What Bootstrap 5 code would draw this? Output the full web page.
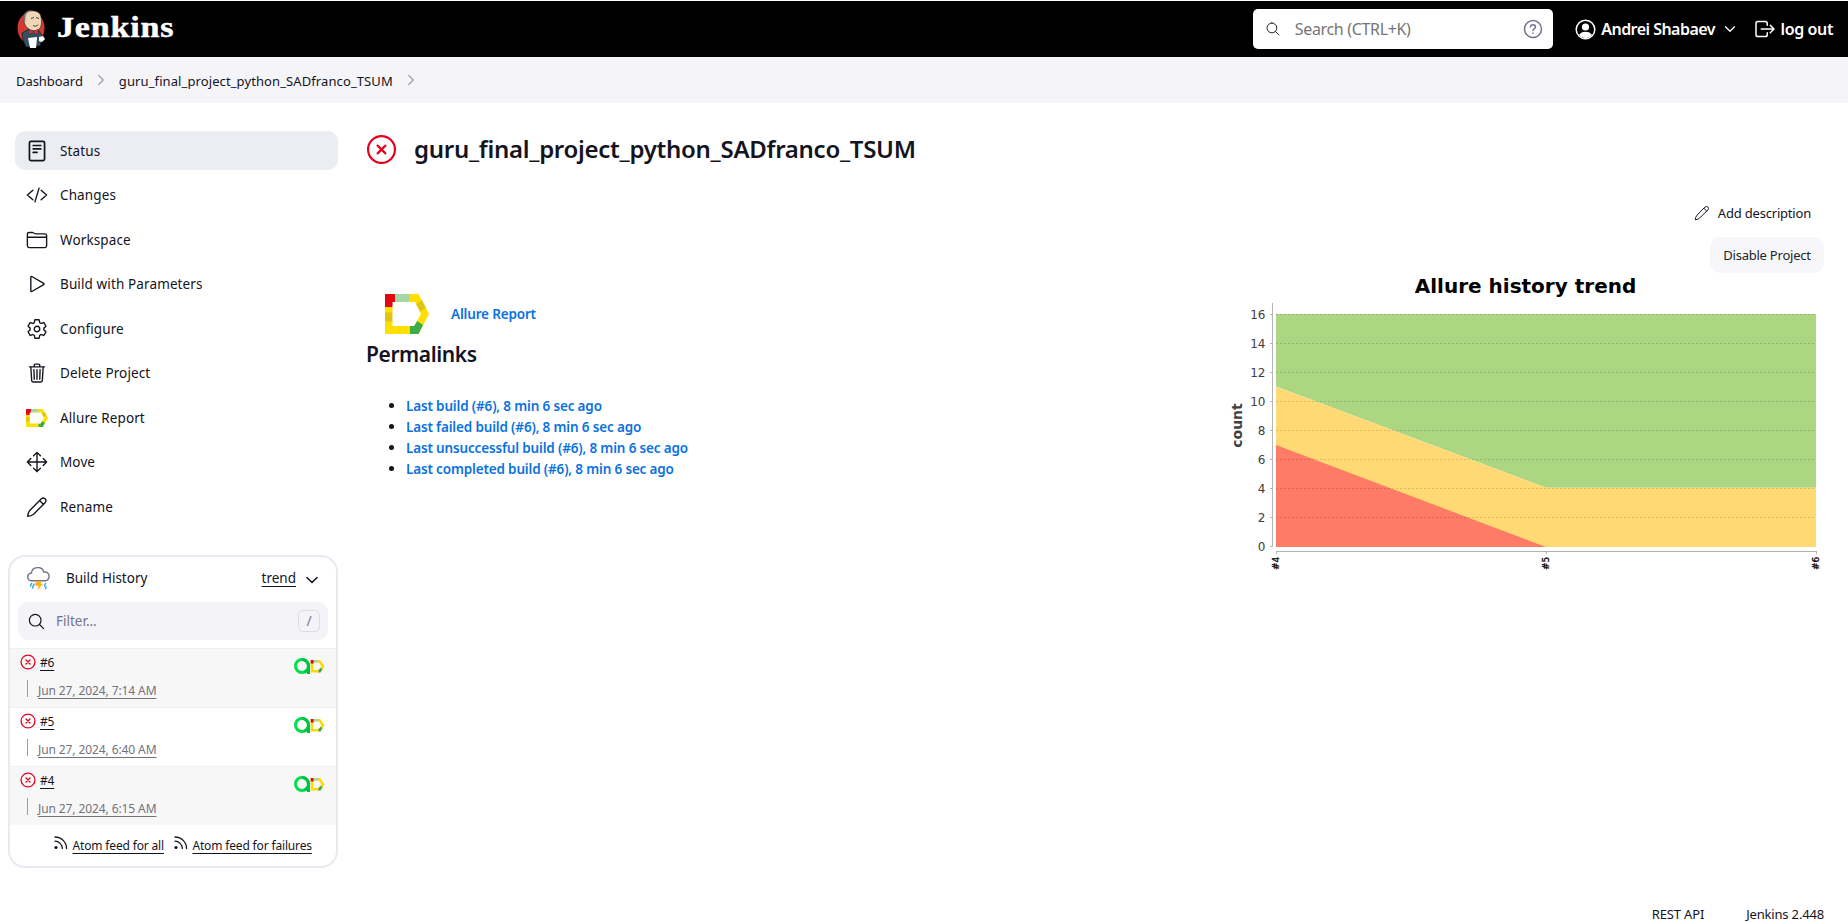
<!DOCTYPE html>
<html lang="en">
<head>
<meta charset="utf-8">
<title>guru_final_project_python_SADfranco_TSUM [Jenkins]</title>
<link rel="stylesheet" href="https://cdn.jsdelivr.net/npm/bootstrap@5.3.0/dist/css/bootstrap.min.css">
<style>
body{font-family:"Noto Sans","Open Sans",sans-serif;font-size:14px;line-height:21px;color:#14141f;height:922px;overflow:hidden;background:#fff}
a{color:inherit}
.ic{fill:none;stroke:currentColor;stroke-width:32;stroke-linecap:round;stroke-linejoin:round;flex:none;display:block}
.topbar{height:57px;background:#000;border-top:1px solid #fff;color:#fff;padding:0 15px 0 16px}
.brand-name{font:bold 30px/40px "Liberation Serif",serif;-webkit-text-stroke:.5px #fff;letter-spacing:.7px;margin-left:11px;margin-top:-5px;transform:scaleX(1.135);transform-origin:left}
.searchbox{width:300px;height:40px;border-radius:5px;background:#fff;padding:0 10px 0 12px;color:#222;margin-right:22px}
.searchbox .hint{color:#757575;font-size:16px;letter-spacing:-.33px;margin-left:14px}
.topbar b{font-size:16px;font-weight:600}
.topbar .user-name{letter-spacing:-.53px;margin-left:5.5px}
.topbar .leave{letter-spacing:-.38px;margin-left:4px}
.crumbs{height:46px;background:#f5f5f8;padding:2px 16px 0;font-size:13px}
.crumbs .ic{color:#9a9aa8;stroke-width:36;margin:-2px 10px 0 10px}
.crumbs .home{letter-spacing:-.05px}
.crumbs .job{letter-spacing:.1px}
.side{width:338px;padding:28px 0 0 15px;font-size:13.5px}
.task{height:39px;border-radius:10px;padding-left:11px;margin-bottom:5.5px;letter-spacing:.12px}
.task span{padding-top:1.5px}
.task .ic,.task .alr{margin-right:12px}
.task.on{background:#ecedf3}
.hist{width:330px;height:313px;margin:29px 0 0 -7px;border:2px solid #e9e9f2;border-radius:17px}
.hist-head{height:45px;padding:0 19px 2px 17px}
.filter{height:38px;margin:0 8px 8px;border-radius:10px;background:#f3f3f8;padding:0 8px 0 9px;color:#73738c}
.filter kbd{width:22px;height:22px;border:1px solid #dddde8;border-radius:5px;background:none;color:#73738c;padding:0;font:14px/20px "Noto Sans";text-align:center}
.brow{height:59px;padding:2px 11px 0 10px;border-top:1px solid #f0f0f0;font-size:12px}
.brow:nth-child(odd){background:#f7f7f7}
.brow .when{color:#73737b;border-left:1px solid #9b9ba3;height:17px;padding-left:10px;margin:7px 0 0 7px;line-height:21px;letter-spacing:-.1px}
.brow .st{color:#e6001f;margin-right:4px;stroke-width:42}
.brow .u{padding-top:1px;letter-spacing:-.2px}
.brow .pair{margin:7px 0 -2px auto}
.when span,.u{text-decoration:underline;text-underline-offset:3px}
.feeds{font-size:12px;padding:10px 0 0 44px;letter-spacing:-.16px}
.feeds .ic{margin:-5px 4.5px 0 0}
.main{padding:26px 24px 0 28px}
h1{font-size:24px;font-weight:650;line-height:40px;margin:0 0 0 18px;letter-spacing:-.28px}
h2{font-size:21px;font-weight:650;line-height:28px;margin:6px 0 27px;letter-spacing:-.4px}
.lnk{color:#0b72e0;font-size:13.5px;font-weight:600;text-decoration:none;letter-spacing:-.16px}
.desc{font-size:13px;height:36px;padding-right:13px;margin-top:26px;letter-spacing:-.2px}
.dis{font-size:13px;height:36px;width:114px;border-radius:10px;background:#f7f7fa;padding:1px 0 0;margin-top:6px;letter-spacing:-.23px}
.perma{padding-left:40px;margin:0}
.perma li{height:21px}
.trend{width:600px;height:300px}
.foot{font-size:13px;padding-right:24px;right:0;bottom:-3px;letter-spacing:-.17px}
</style>
</head>
<body>
<svg width="0" height="0" class="position-absolute">
<symbol id="search" viewBox="0 0 512 512"><path d="M221 64a157 157 0 10157 157A157 157 0 00221 64zM338 338l110 110"/></symbol>
<symbol id="fail" viewBox="0 0 512 512"><circle cx="256" cy="256" r="222"/><path d="M320 320L192 192M192 320l128-128"/></symbol>
<symbol id="down" viewBox="0 0 512 512"><path d="M112 184l144 144 144-144"/></symbol>
<symbol id="next" viewBox="0 0 512 512"><path d="M184 112l144 144-144 144"/></symbol>
<symbol id="pencil" viewBox="0 0 512 512"><path d="M358 62a64 64 0 0190 90L176 424Q120 470 40 472Q42 392 88 336zM316 104l92 92"/></symbol>
<symbol id="rss" viewBox="0 0 14 14"><circle cx="2" cy="11.5" r="1.6" fill="currentColor" stroke="none"/><path d="M1 5.2a7.3 7.3 0 017.3 7.3M1 1a11.6 11.6 0 0111.6 11.6" stroke-width="1.3"/></symbol>
<symbol id="alr" viewBox="0 0 44 40"><path fill="#ffde00" d="M0 0h33.500L44 20 33.500 40H0z"/><path fill="#e30613" d="M0 0h10v13H0z"/><path fill="#a5d6a7" d="M10 0h14.500v8H10z"/><path fill="#e0c510" d="M0 18.500h8v9H0zM30 11l7-5 4 8-7 4z"/><path fill="#3dab49" d="M25 40v-8h4l3-5 6 4-4.500 9z"/><path fill="#fff" d="M7.500 8H30l6 12-7 12H7.500z"/></symbol>
<symbol id="allpair" viewBox="0 0 31 17"><circle cx="8" cy="8" r="6.500" fill="none" stroke="#00e04c" stroke-width="3"/><path d="M14.500 7v9" stroke="#00b844" stroke-width="3"/><path d="M8 1.500A6.500 6.500 0 0114.500 8c0 3-2 5.500-4 6" fill="none" stroke="#00c246" stroke-width="3"/><path d="M18 3.200h7.500l3.500 5-3.500 5H18z" fill="none" stroke="#ffd800" stroke-width="2.500"/><path d="M16.700 2h3v3.500h-3z" fill="#e30613"/><path d="M19.700 2h4.500v2.500h-4.500z" fill="#a5d6a7"/><path d="M24.500 14.500v-2.600l2-2 2 1.200-2 3.400z" fill="#3dab49"/></symbol>
</svg>

<header class="topbar d-flex align-items-center">
  <svg width="30" height="40" viewBox="0 0 30 40"><ellipse cx="15" cy="19" rx="13.500" ry="16" fill="#d33833"/><path fill="#335061" stroke="#111" stroke-width=".6" d="M6 24l7-4 10 2 4 6-3 9-14 1-3-7z"/><path fill="#f0d6b7" stroke="#222" stroke-width=".6" d="M8 7C9 1 20 0 24 5c2 4 2 11 0 14-3 4-9 3-11 1C9 18 7 12 8 7z"/><path fill="#777" d="M7.500 7c1-4 5-6 8-6-4 2-6 4-6 8l-.5 5C8 13 7 11 7.500 7z"/><path fill="#d33833" stroke="#511" stroke-width=".4" d="M13 20.500l4 2 5-2v5l-5-2-4 2z"/><path d="M15 9.500l3-1M20 8.500l3 1M17 16.500c2 1 4 1 5-1" fill="none" stroke="#333" stroke-width=".9"/><path fill="#fff" d="M12 29l9-1v1l-1 10h-6zM23 28l4-1 2 3-3 3-3-1z"/></svg>
  <span class="brand-name">Jenkins</span>
  <div class="searchbox d-flex align-items-center ms-auto">
    <svg class="ic" width="16" height="16"><use href="#search"/></svg><span class="hint">Search (CTRL+K)</span>
    <svg class="ic ms-auto" width="20" height="20" viewBox="0 0 20 20" style="stroke-width:1.500;color:#73738c"><circle cx="10" cy="10" r="8.500"/><path d="M7.500 8c0-3.300 5-3 5 0 0 1.600-2.500 1.600-2.500 3.500M10 14v.2"/></svg>
  </div>
  <svg class="ic" width="21" height="21" viewBox="0 0 21 21" style="stroke-width:1.500"><circle cx="10.500" cy="10.500" r="9.300"/><g fill="#fff" stroke="none"><circle cx="10.500" cy="8" r="3.600"/><path d="M4 16c2-4.500 11-4.500 13 0-3 4-10 4-13 0z"/></g></svg>
  <b class="user-name">Andrei Shabaev</b>
  <svg class="ic" width="16" height="16" style="margin:0 14.500px 0 7px;stroke-width:40"><use href="#down"/></svg>
  <svg class="ic" width="24" height="24" viewBox="0 0 512 512"><path d="M304 336v40a40 40 0 01-40 40H104a40 40 0 01-40-40V136a40 40 0 0140-40h152c22 0 48 18 48 40v40M368 336l80-80-80-80M176 256h256"/></svg>
  <b class="leave">log out</b>
</header>
<nav class="crumbs d-flex align-items-center"><span class="home">Dashboard</span><svg class="ic" width="16" height="16"><use href="#next"/></svg><span class="job">guru_final_project_python_SADfranco_TSUM</span><svg class="ic" width="16" height="16"><use href="#next"/></svg></nav>

<div class="d-flex">
<aside class="side flex-shrink-0">
  <div class="task on d-flex align-items-center"><svg class="ic" width="22" height="22" viewBox="0 0 512 512" style="stroke-width:40"><rect x="80" y="32" width="352" height="448" rx="36"/><path d="M168 128h176M168 208h176M168 288h88"/></svg><span>Status</span></div>
  <div class="task d-flex align-items-center"><svg class="ic" width="22" height="22" viewBox="0 0 512 512"><path d="M160 368L32 256l128-112M352 368l128-112-128-112M304 96l-96 320"/></svg><span>Changes</span></div>
  <div class="task d-flex align-items-center"><svg class="ic" width="22" height="22" viewBox="0 0 512 512"><path d="M440 432H72a40 40 0 01-40-40V120a40 40 0 0140-40h76a40 40 0 0122 7l28 18a40 40 0 0022 7h220a40 40 0 0140 40v240a40 40 0 01-40 40zM32 192h448"/></svg><span>Workspace</span></div>
  <div class="task d-flex align-items-center"><svg class="ic" width="22" height="22" viewBox="0 0 512 512"><path d="M112 96v320c0 12 12 20 24 14l276-160c10-6 10-22 0-28L136 82c-12-6-24 2-24 14z"/></svg><span>Build with Parameters</span></div>
  <div class="task d-flex align-items-center"><svg class="ic" width="22" height="22" viewBox="0 0 512 512"><path d="M262.290 192.310a64 64 0 1057.400 57.400 64.130 64.130 0 00-57.400-57.400zM416.390 256a154.340 154.340 0 01-1.530 20.790l45.210 35.460a10.810 10.810 0 012.450 13.750l-42.770 74a10.810 10.810 0 01-13.140 4.590l-44.900-18.080a16.110 16.110 0 00-15.170 1.750A164.480 164.480 0 01325 400.800a15.940 15.940 0 00-8.820 12.140l-6.730 47.890a11.080 11.080 0 01-10.680 9.170h-85.540a11.110 11.110 0 01-10.690-8.870l-6.720-47.820a16.070 16.070 0 00-9-12.220 155.300 155.300 0 01-21.460-12.570 16 16 0 00-15.110-1.710l-44.890 18.070a10.810 10.810 0 01-13.140-4.580l-42.770-74a10.800 10.800 0 012.450-13.750l38.210-30a16.050 16.050 0 006-14.080c-.36-4.170-.58-8.330-.58-12.500s.21-8.270.58-12.350a16 16 0 00-6.070-13.940l-38.190-30A10.810 10.810 0 0149.480 186l42.770-74a10.810 10.810 0 0113.140-4.590l44.900 18.080a16.110 16.110 0 0015.170-1.750A164.480 164.480 0 01187 111.200a15.940 15.940 0 008.820-12.140l6.730-47.890A11.080 11.080 0 01213.230 42h85.540a11.110 11.110 0 0110.690 8.870l6.720 47.820a16.070 16.070 0 009 12.220 155.300 155.300 0 0121.460 12.570 16 16 0 0015.110 1.710l44.890-18.070a10.810 10.810 0 0113.140 4.580l42.770 74a10.800 10.800 0 01-2.450 13.750l-38.210 30a16.050 16.050 0 00-6.050 14.080c.33 4.140.55 8.300.55 12.470z"/></svg><span>Configure</span></div>
  <div class="task d-flex align-items-center"><svg class="ic" width="22" height="22" viewBox="0 0 512 512"><path d="M112 112l20 320c1 18 14 32 32 32h184c18 0 31-14 32-32l20-320M80 112h352M192 112V72a24 24 0 0124-24h80a24 24 0 0124 24v40M256 176v224M184 176l8 224M328 176l-8 224"/></svg><span>Delete Project</span></div>
  <div class="task d-flex align-items-center"><svg class="alr" width="22" height="18" viewBox="0 0 44 40" preserveAspectRatio="none"><use href="#alr" width="44" height="40"/></svg><span>Allure Report</span></div>
  <div class="task d-flex align-items-center"><svg class="ic" width="22" height="22" viewBox="0 0 512 512"><path d="M176 112l80-80 80 80M256 32v448M176 400l80 80 80-80M400 176l80 80-80 80M112 176l-80 80 80 80M32 256h448"/></svg><span>Move</span></div>
  <div class="task d-flex align-items-center"><svg class="ic" width="22" height="22"><use href="#pencil"/></svg><span>Rename</span></div>

  <section class="hist">
    <div class="hist-head d-flex align-items-center">
      <svg class="ic" width="23" height="23" viewBox="0 0 23 23" style="stroke-width:1.400"><path stroke="#73738c" d="M5 13.800C-.6 14-.5 6.500 4.500 6 5 -.5 15-1.500 16.800 5 23.500 4.500 23.800 13.500 18 13.800z"/><path fill="#ffb21a" stroke="#ffb21a" stroke-width=".6" d="M9.500 14.500h5L13 17h2.500l-4.500 5.300.8-3.800H8.500z"/><path stroke="#1ea7ee" d="M4.500 16.500L3.500 19M7 17l-1.500 4M18.500 16.500L17.500 19M19 20l-.5 1.500"/></svg>
      <span style="margin-left:16px">Build History</span><span class="u ms-auto">trend</span>
      <svg class="ic" width="18" height="18" style="margin:2px -4px 0 7px;stroke-width:44"><use href="#down"/></svg>
    </div>
    <div class="filter d-flex align-items-center"><svg class="ic" width="19" height="19" style="margin-right:10px;color:#14141f"><use href="#search"/></svg><span>Filter...</span><kbd class="ms-auto">/</kbd></div>
    <div>
      <div class="brow"><div class="d-flex align-items-center"><svg class="ic st" width="16" height="16"><use href="#fail"/></svg><span class="u">#6</span><svg class="pair" width="31" height="17"><use href="#allpair"/></svg></div><div class="when"><span>Jun 27, 2024, 7:14 AM</span></div></div>
      <div class="brow"><div class="d-flex align-items-center"><svg class="ic st" width="16" height="16"><use href="#fail"/></svg><span class="u">#5</span><svg class="pair" width="31" height="17"><use href="#allpair"/></svg></div><div class="when"><span>Jun 27, 2024, 6:40 AM</span></div></div>
      <div class="brow"><div class="d-flex align-items-center"><svg class="ic st" width="16" height="16"><use href="#fail"/></svg><span class="u">#4</span><svg class="pair" width="31" height="17"><use href="#allpair"/></svg></div><div class="when"><span>Jun 27, 2024, 6:15 AM</span></div></div>
    </div>
    <div class="feeds d-flex align-items-center"><svg class="ic" width="14" height="14"><use href="#rss"/></svg><span class="u">Atom feed for all</span><svg class="ic" width="14" height="14" style="margin-left:10px"><use href="#rss"/></svg><span class="u">Atom feed for failures</span></div>
  </section>
</aside>

<main class="main flex-grow-1">
  <div class="d-flex align-items-center"><svg class="ic" width="31" height="31" style="color:#e6001f;margin-right:-1px;stroke-width:36"><use href="#fail"/></svg><h1>guru_final_project_python_SADfranco_TSUM</h1></div>
  <div class="d-flex justify-content-between">
    <section>
      <div class="d-flex align-items-center" style="padding:125px 0 0 19px"><svg width="44" height="40"><use href="#alr"/></svg><a class="lnk" style="margin-left:22px">Allure Report</a></div>
      <h2>Permalinks</h2>
      <ul class="perma"><li><a class="lnk">Last build (#6), 8 min 6 sec ago</a></li><li><a class="lnk">Last failed build (#6), 8 min 6 sec ago</a></li><li><a class="lnk">Last unsuccessful build (#6), 8 min 6 sec ago</a></li><li><a class="lnk">Last completed build (#6), 8 min 6 sec ago</a></li></ul>
    </section>
    <section class="d-flex flex-column align-items-end">
      <div class="desc d-flex align-items-center"><svg class="ic" width="16" height="16" style="margin-right:8px"><use href="#pencil"/></svg><span>Add description</span></div>
      <button class="dis btn"><span>Disable Project</span></button>
      <svg class="trend" viewBox="1224 273 600 300" font-family="DejaVu Sans">
        <text x="1525.500" y="292.500" text-anchor="middle" font-size="20" font-weight="bold">Allure history trend</text>
        <path fill="#add683" d="M1276 314h540v173.700h-270L1276 386.600z"/><path fill="#ffd973" d="M1276 386.600L1546 487.700h270V547H1276z"/><path fill="#fe7b65" d="M1276 445L1546 547h-270z"/>
        <path fill="none" stroke="#000" stroke-opacity=".14" stroke-dasharray="2 2" d="M1276 314.500h540M1276 343.500h540M1276 372.500h540M1276 401.500h540M1276 430.500h540M1276 459.500h540M1276 488.500h540M1276 517.500h540"/>
        <path fill="none" stroke="#b3b3b3" d="M1272.500 303v244M1270 314.500h2M1270 343.500h2M1270 372.500h2M1270 401.500h2M1270 430.500h2M1270 459.500h2M1270 488.500h2M1270 517.500h2M1270 546.500h2M1276 551.500h541M1276.500 552v2M1546.500 552v2M1816.500 552v2"/>
        <g font-size="12" fill="#404040" text-anchor="end"><text x="1265.500" y="319">16</text><text x="1265.500" y="348">14</text><text x="1265.500" y="377">12</text><text x="1265.500" y="406">10</text><text x="1265.500" y="435">8</text><text x="1265.500" y="464">6</text><text x="1265.500" y="493">4</text><text x="1265.500" y="522">2</text><text x="1265.500" y="551">0</text></g>
        <text transform="translate(1242 425.500) rotate(-90)" text-anchor="middle" font-size="14" font-weight="bold" fill="#404040">count</text>
        <g font-size="9" stroke="#000" stroke-width=".3"><text transform="translate(1279 570) rotate(-90)">#4</text><text transform="translate(1549 570) rotate(-90)">#5</text><text transform="translate(1819 570) rotate(-90)">#6</text></g>
      </svg>
    </section>
  </div>
</main>
</div>
<footer class="foot position-absolute d-flex"><span>REST API</span><span style="margin-left:42px">Jenkins 2.448</span></footer>
<script src="https://cdn.jsdelivr.net/npm/bootstrap@5.3.0/dist/js/bootstrap.bundle.min.js"></script>
</body>
</html>
